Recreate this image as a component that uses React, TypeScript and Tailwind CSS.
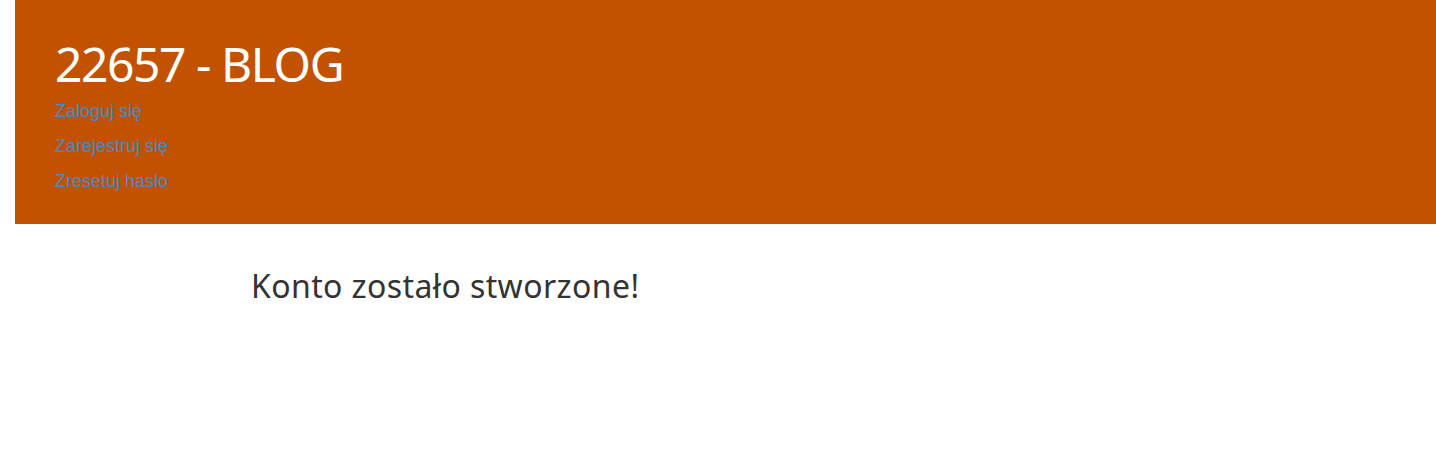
const links = ["Zaloguj się", "Zarejestruj się", "Zresetuj hasło"];

const App = () => {
  return (
    <div className="min-h-[457px] w-full bg-white">
      <header className="ml-[15px] h-[224px] bg-[#c25100] pl-[40px] pt-[36px]">
        <h1 className="text-[48px] leading-[56px] text-white font-['Noto_Sans',sans-serif] tracking-[-1.45px]">
          22657 - BLOG
        </h1>
        <ul className="mt-[2px] flex flex-col">
          {links.map((l) => (
            <li key={l} className="h-[35px] leading-[35px]">
              <a href="#" className="text-[18px] text-[#428bca] font-['Liberation_Sans',Arial,sans-serif]">
                {l}
              </a>
            </li>
          ))}
        </ul>
      </header>
      <div className="pl-[251px] pt-[40px]">
        <h2 className="text-[32px] leading-[44px] text-[#333] font-['Noto_Sans',sans-serif] tracking-[0.4px]">
          Konto zostało stworzone!
        </h2>
      </div>
    </div>
  );
};

export default App;
